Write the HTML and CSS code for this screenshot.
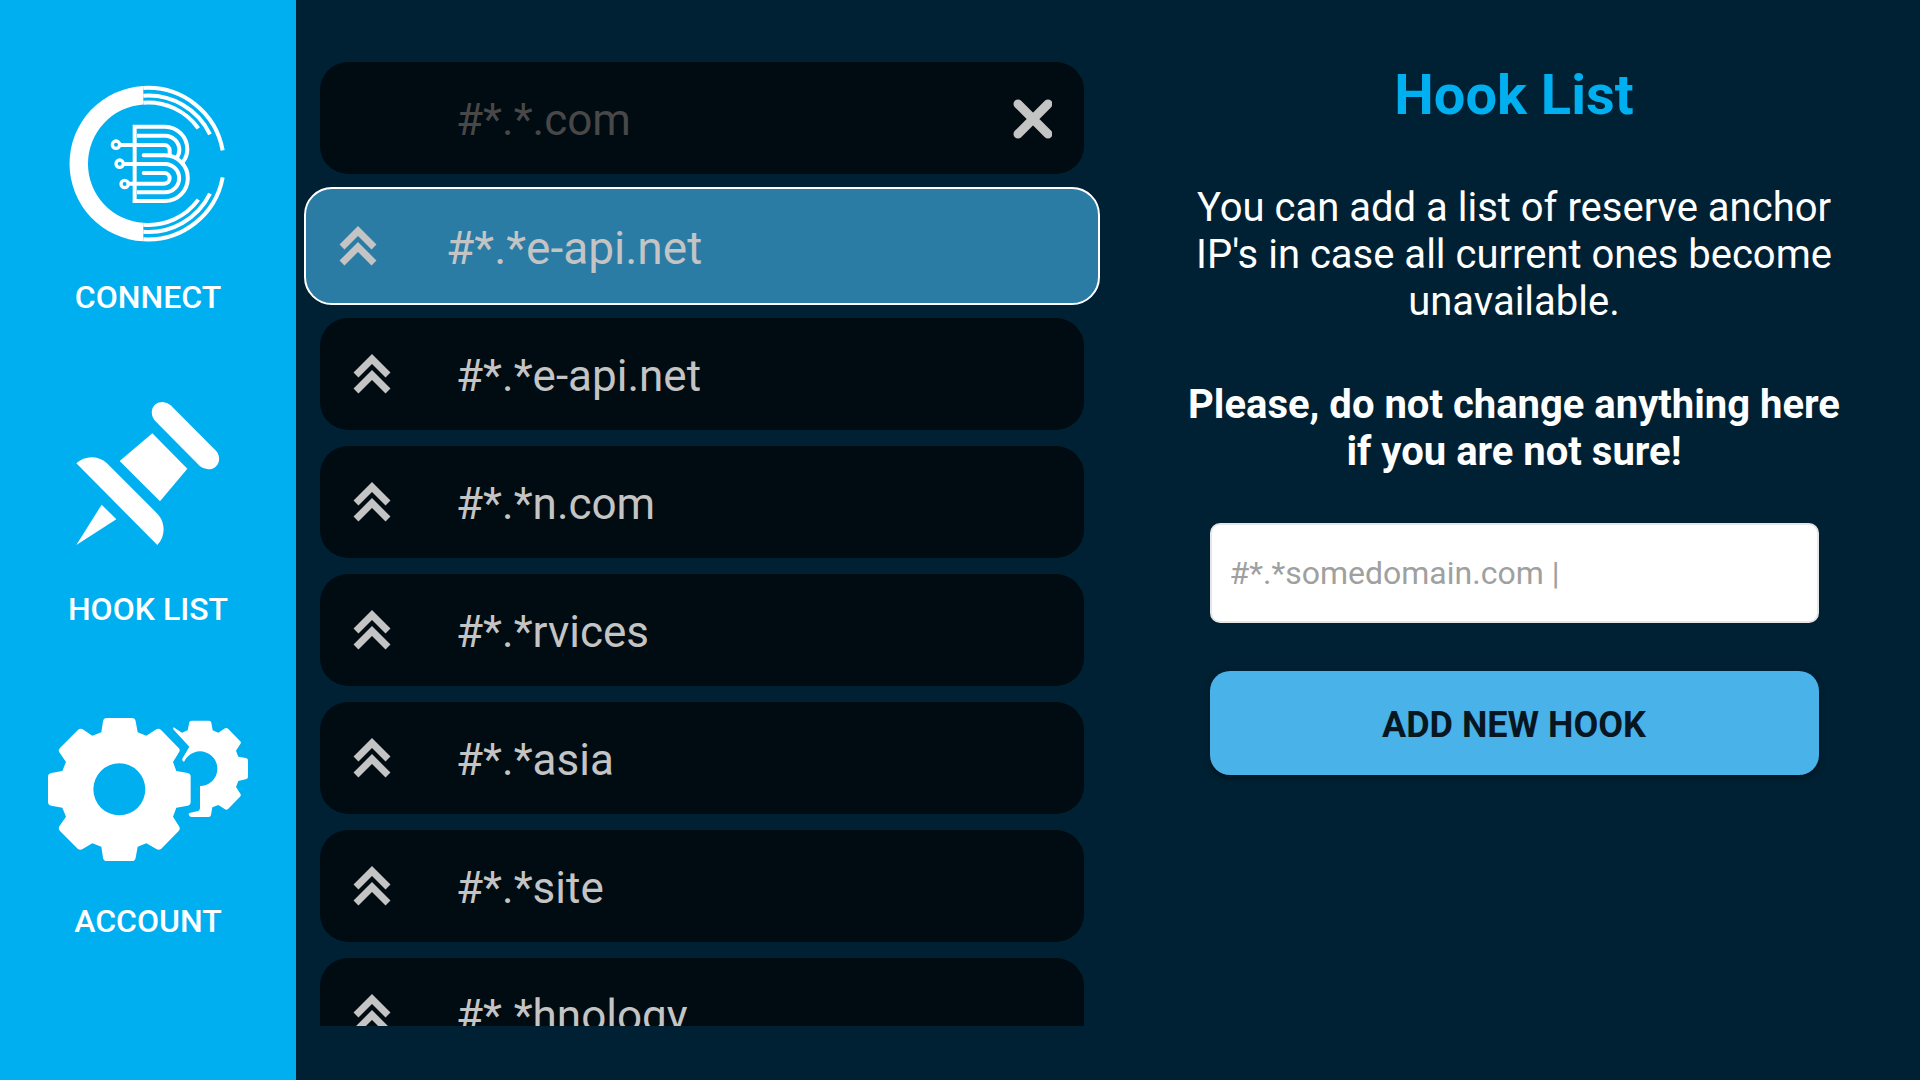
FILE: index.html
```html
<!DOCTYPE html>
<html lang="en">

<head>
    <meta charset="utf-8">
    <title>Hook List</title>
    <link rel="stylesheet" href="styles.css">
</head>

<body>
    <!-- shared row icon -->
    <svg class="defs" width="0" height="0" aria-hidden="true">
        <symbol id="up" viewBox="0 0 40 44">
            <path d="M4 23 L20 7 L36 23 M4 39 L20 23 L36 39" fill="none" stroke="currentColor" stroke-width="7" />
        </symbol>
    </svg>

    <nav class="sidebar">
        <a href="#connect" class="nav-item">
            <svg class="nav-icon" viewBox="48 36 492 492" aria-hidden="true">
                <path d="M280 48 A233.3 233.3 0 0 0 280 514 V458.6 A178 178 0 0 1 280 103.4 Z" fill="#fff" />
                <g fill="none" stroke="#fff" stroke-width="12">
                    <path d="M280 54 A228 228 0 0 1 518 241" />
                    <path d="M280 77 A205 205 0 0 1 480 193" />
                    <path d="M280 98 A184 184 0 0 1 445 175" />
                    <path d="M280 508 A228 228 0 0 0 518 322" />
                    <path d="M280 485 A205 205 0 0 0 480 371" />
                    <path d="M280 464 A184 184 0 0 0 445 389" />
                    <path d="M254 399 V170 H345 A68 68 0 0 1 412 238 Q412 260 398 277" />
                    <path d="M261 197 H345 A43 43 0 0 1 388 240 Q388 254 378 266" />
                    <path d="M210 225 H343 A16 16 0 0 1 359 241 V256" />
                    <path d="M281 256 H345 A68 68 0 0 1 345 393 H254" stroke-linecap="round" />
                    <path d="M222 282 H345 A42 42 0 0 1 345 367 H261" />
                    <path d="M281 309 H343 A16 16 0 0 1 343 341 H236" stroke-linecap="round" />
                    <circle cx="198" cy="224" r="11" stroke-width="10" />
                    <circle cx="209" cy="281" r="11" stroke-width="10" />
                    <circle cx="224" cy="342" r="11" stroke-width="10" />
                </g>
            </svg>
            <span>CONNECT</span>
        </a>
        <a href="#hooks" class="nav-item">
            <svg class="nav-icon" viewBox="48 42 492 492" aria-hidden="true">
                <g fill="#fff">
                    <path d="M315 122 C296 100 306 66 338 66 Q352 67 362 76 L498 212 C518 236 504 268 474 268 Q460 267 450 259 Z" />
                    <path d="M307 160 L412 266 L330 364 L209 243 Z" />
                    <path d="M79 250 C104 226 145 226 170 249 L322 401 C346 426 348 468 322 495 Z" />
                    <path d="M155 374 L199 418 L79 495 Z" />
                </g>
            </svg>
            <span>HOOK LIST</span>
        </a>
        <a href="#account" class="nav-item">
            <svg class="nav-icon nav-icon-wide" viewBox="54 18 600 492" aria-hidden="true">
                <g fill="#fff" fill-rule="evenodd">
                    <path d="M230 54 H306 Q315 54 317 64 L323 97 L349 107 L379 88 Q387 84 394 91 L446 144 Q452 150 447 157 L429 186 L439 213 L473 219 Q482 221 482 230 V306 Q482 315 473 317 L439 323 L429 350 L447 379 Q452 386 446 393 L394 446 Q387 452 379 447 L349 430 L323 440 L317 473 Q315 483 306 483 H230 Q221 483 219 473 L214 440 L187 430 L158 447 Q150 452 143 446 L90 393 Q84 386 88 379 L108 350 L97 323 L64 317 Q54 315 54 306 V230 Q54 221 64 219 L97 213 L108 186 L88 157 Q84 150 90 144 L143 91 Q150 84 158 88 L187 107 L214 97 L219 64 Q221 54 230 54 Z M268 190 A78 78 0 1 0 268 346 A78 78 0 1 0 268 190 Z" />
                    <path d="M484 62 H537 Q543 62 544 68 L548 91 L565 98 L585 85 Q590 82 595 87 L630 123 Q635 127 631 132 L618 152 L625 170 L647 174 Q654 175 654 181 V231 Q654 237 647 238 L625 243 L618 261 L631 281 Q635 286 630 290 L595 326 Q590 331 585 328 L565 315 L547 322 L543 345 Q542 351 536 351 H485 Q479 351 477 346 Q474 339 481 338 L501 334 Q510 332 510 323 V258 A52 52 0 1 0 465 180 Q463 187 459 184 Q455 180 458 174 L478 140 L431 89 Q428 85 431 82 L456 98 L473 91 L478 67 Q479 62 484 62 Z" />
                </g>
            </svg>
            <span>ACCOUNT</span>
        </a>
    </nav>

    <main class="hooks">
        <ul class="hook-list">
            <li class="hook locked">
                <span class="spacer"></span>
                <span class="name">#*.*.com</span>
                <button type="button" class="icon-btn" aria-label="Remove">
                    <svg viewBox="0 0 40 44">
                        <path d="M6 8 L36 38 M36 8 L6 38" fill="none" stroke="currentColor" stroke-width="9" stroke-linecap="round" />
                    </svg>
                </button>
            </li>
            <li class="hook selected">
                <button type="button" class="icon-btn" aria-label="Move up"><svg><use href="#up" /></svg></button>
                <span class="name">#*.*e-api.net</span>
            </li>
            <li class="hook">
                <button type="button" class="icon-btn" aria-label="Move up"><svg><use href="#up" /></svg></button>
                <span class="name">#*.*e-api.net</span>
            </li>
            <li class="hook">
                <button type="button" class="icon-btn" aria-label="Move up"><svg><use href="#up" /></svg></button>
                <span class="name">#*.*n.com</span>
            </li>
            <li class="hook">
                <button type="button" class="icon-btn" aria-label="Move up"><svg><use href="#up" /></svg></button>
                <span class="name">#*.*rvices</span>
            </li>
            <li class="hook">
                <button type="button" class="icon-btn" aria-label="Move up"><svg><use href="#up" /></svg></button>
                <span class="name">#*.*asia</span>
            </li>
            <li class="hook">
                <button type="button" class="icon-btn" aria-label="Move up"><svg><use href="#up" /></svg></button>
                <span class="name">#*.*site</span>
            </li>
            <li class="hook">
                <button type="button" class="icon-btn" aria-label="Move up"><svg><use href="#up" /></svg></button>
                <span class="name">#*.*hnology</span>
            </li>
        </ul>
    </main>

    <section class="panel">
        <h1>Hook List</h1>
        <p>You can add a list of reserve anchor IP's in case all current ones become unavailable.</p>
        <p class="warning">Please, do not change anything here if you are not sure!</p>
        <form class="hook-form">
            <input type="text" aria-label="New hook" placeholder="#*.*somedomain.com |">
            <button type="button">ADD NEW HOOK</button>
        </form>
    </section>
</body>

</html>
```

FILE: styles.css
```css
* {
    box-sizing: border-box;
}

body {
    display: grid;
    grid-template-columns: 296px 1fr 1fr;
    height: 100vh;
    margin: 0;
    overflow: hidden;
    background-color: #002133;
    color: white;
    font-family: Roboto, sans-serif;
}

button {
    border: 0;
    font-family: inherit;
    cursor: pointer;
}

.defs {
    position: absolute;
}

/* left menu */
.sidebar {
    display: flex;
    flex-direction: column;
    gap: 78px;
    padding-top: 82px;
    background-color: #00aff0;
}

.nav-item {
    display: flex;
    flex-direction: column;
    align-items: center;
    gap: 32px;
    color: white;
    font-size: 32px;
    font-weight: 500;
    line-height: 38px;
    text-decoration: none;
}

.nav-icon {
    width: 164px;
    height: 164px;
}

.nav-icon-wide {
    width: 200px;
}

/* hooks */
.hooks {
    min-height: 0;
    padding: 0 8px 54px;
}

.hook-list {
    display: flex;
    flex-direction: column;
    gap: 16px;
    height: 100%;
    margin: 0;
    padding: 62px 16px 0;
    overflow: hidden;
    list-style: none;
}

.hook {
    display: flex;
    flex-shrink: 0;
    align-items: center;
    gap: 64px;
    height: 112px;
    padding: 0 32px;
    border-radius: 28px;
    background-color: #000c12;
    color: #c4c4c4;
    font-size: 44px;
    line-height: 52px;
}

.hook.selected {
    gap: 68px;
    height: 118px;
    margin: -3px -16px;
    border: 2px solid white;
    background-color: #2a7ca5;
    font-size: 46px;
}

.icon-btn {
    flex-shrink: 0;
    width: 40px;
    height: 44px;
    padding: 0;
    background: none;
    color: #c4c4c4;
}

.icon-btn svg {
    display: block;
    width: 100%;
    height: 100%;
}

.spacer {
    width: 40px;
}

.name {
    flex: 1;
    padding-top: 4px;
}

.locked .name {
    color: #484848;
}

/* right side */
.panel {
    padding-top: 62px;
    text-align: center;
}

h1 {
    margin: 0 0 56px;
    color: #00aff0;
    font-size: 56px;
    line-height: 66px;
}

p {
    margin: 0 64px 56px;
    font-size: 40px;
    line-height: 47px;
}

.warning {
    margin-bottom: 48px;
    font-weight: bold;
}

.hook-form {
    display: flex;
    flex-direction: column;
    gap: 48px;
    width: 75%;
    margin: 0 auto;
}

.hook-form input {
    height: 100px;
    padding: 0 18px;
    border: 2px solid #e6e6e6;
    border-radius: 10px;
    background-color: white;
    font-family: inherit;
    font-size: 32px;
}

.hook-form input::placeholder {
    color: #a0a0a0;
}

.hook-form button {
    height: 104px;
    padding-top: 4px;
    border-radius: 20px;
    background-color: #48b2e9;
    box-shadow: 0 3px 6px rgba(0, 0, 0, 0.4);
    color: #08171f;
    font-size: 36px;
    font-weight: bold;
}
```
